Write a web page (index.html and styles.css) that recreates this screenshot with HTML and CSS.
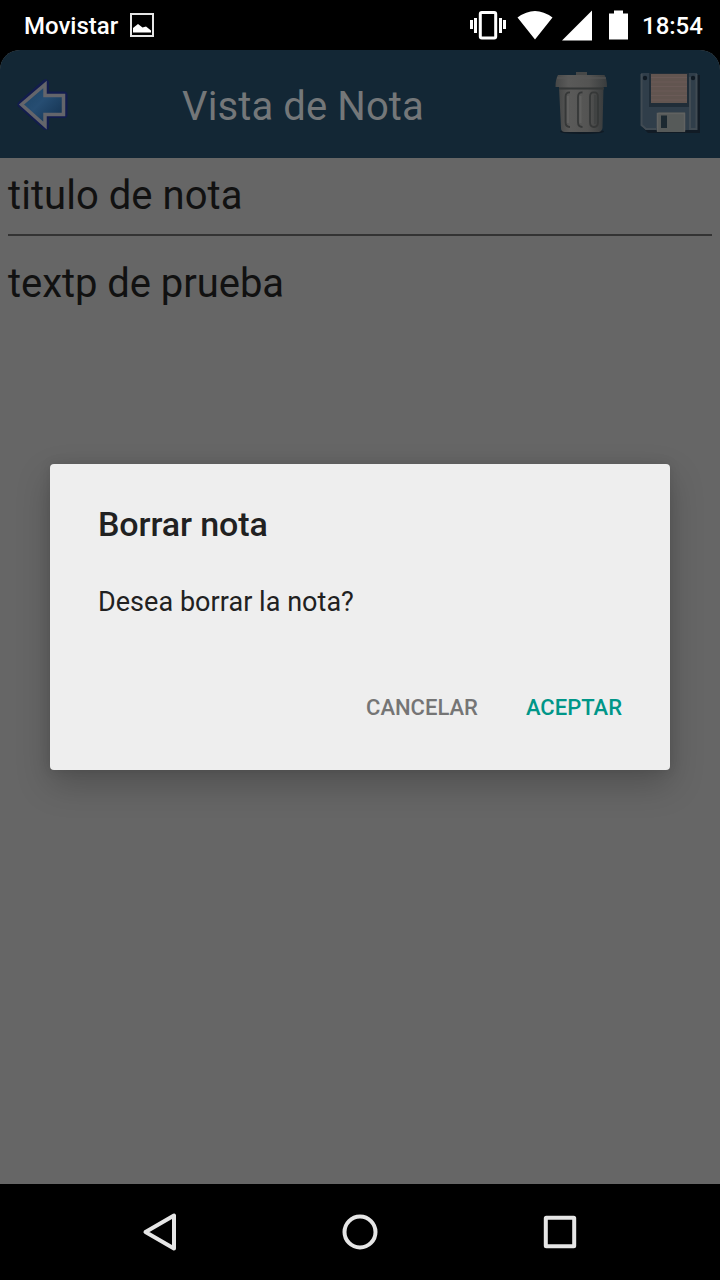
FILE: index.html
```html
<!DOCTYPE html>
<html lang="es">
<head>
<meta charset="utf-8">
<title>Vista de Nota</title>
<link rel="stylesheet" href="styles.css">
</head>
<body>
<div class="phone">
  <div class="status">
    <span class="carrier">Movistar</span>
    <svg class="picture" width="24" height="24" viewBox="0 0 24 24"><rect x="1" y="1" width="22" height="22" fill="none" stroke="#e6e6e6" stroke-width="2"/><path d="M3 19.500V15L8 11 12.500 14.500 16 13.500 21 17.500V19.500Z" fill="#fff"/></svg>
    <svg class="indicators" width="160" height="36" viewBox="0 0 160 36" fill="#fff"><path d="M0 15h3v9H0zM4 13h3v15H4zM29 13h3v15H29zM33 15h3v9h-3z"/><rect x="10.300" y="7.500" width="15.400" height="25.500" rx="1.500" fill="none" stroke="#fff" stroke-width="3"/><path d="M47.500 12.500Q65 -.5 82.500 12.500L65 34.500ZM92 35.500 122 5.500V35.500ZM139 8.500h5V5.500h9v3h5V34.500H139Z"/></svg>
    <span class="clock">18:54</span>
  </div>
  <div class="screen">
    <header class="header">
      <svg class="back" width="64" height="64" viewBox="0 0 64 64"><defs><linearGradient id="blue" x1="0" x2="1" y1="0" y2="1"><stop stop-color="#1b4263"/><stop offset=".45" stop-color="#264d72"/><stop offset="1" stop-color="#102c49"/></linearGradient></defs><path d="M13 32.500 37.500 11V23H56V42.500H37.500V54.500Z" fill="none" stroke="#12185a" stroke-width="7" stroke-linejoin="round" opacity=".7"/><path d="M13.500 32.500 37 12.500V23.500H55.500V42.500H37V53.500Z" fill="url(#blue)" stroke="#64656b" stroke-width="3.500"/></svg>
      <h1 class="heading">Vista de Nota</h1>
      <svg class="trash" width="56" height="66" viewBox="0 0 56 66"><defs><linearGradient id="can"><stop stop-color="#464747"/><stop offset=".25" stop-color="#5a5a59"/><stop offset=".65" stop-color="#545453"/><stop offset="1" stop-color="#393c3d"/></linearGradient></defs><ellipse cx="29" cy="61.500" rx="22" ry="2.500" fill="#101b25"/><path d="M23 2h11v5H23z" fill="#464848"/><path d="M6 17H50.500L49.500 58q-1 4-4 4H12q-4 0-4-4Z" fill="url(#can)"/><path d="M5 5H51.500Q54 9 54 17H2.500Q2.500 9 5 5Z" fill="url(#can)"/><path d="M4 8H53" stroke="#585959" fill="none"/><path d="M6 18.500H51" stroke="#343737" stroke-width="2"/><path d="M17 22.500Q12.500 22 12.500 27V52Q12.500 57 17 57M29.500 22.500Q25 22 25 27V52Q25 57 29.500 57M41 22.500Q37 22 37 27V52Q37 57 41 57Q45 57 45 52V27Q45 22 41 22.500" fill="none" stroke="#363838" stroke-width="1.800"/><path d="M15 26V53M27.500 26V53" stroke="#60605f" stroke-width="2"/><path d="M42.500 25V54" stroke="#414343" stroke-width="3"/></svg>
      <svg class="save" width="60" height="62" viewBox="0 0 60 62"><path d="M3 3H60V61H8L2 55Z" fill="#111b25"/><path d="M1 1H57V58H6L1 53Z" fill="#303e4a"/><path d="M1.500 2V53L6 57H16M50 5V57H56.500V2" fill="none" stroke="#414b53" stroke-width="2"/><path d="M9 1H49V35H9z" fill="#202d38"/><path d="M11 2H47V31H11z" fill="#625550"/><path d="M11 5.500H47M11 10H47M11 14.500H47M11 19H47M11 23.500H47M11 28H47" stroke="#6a5a57"/><circle cx="5" cy="6" r="2.200" fill="#101a23"/><circle cx="53" cy="6" r="2.200" fill="#101a23"/><path d="M17 42.500q0-2 2-2H45V60H17Z" fill="#565a59"/><path d="M17.500 59.500V41.500H44.500V59.500" fill="none" stroke="#606261" stroke-width="1.500"/><path d="M21 43.500h6v12.500h-6z" fill="#1c2931"/></svg>
    </header>
    <main class="note">
      <div class="note-title">titulo de nota</div>
      <div class="note-text">textp de prueba</div>
    </main>
  </div>
  <nav class="nav">
    <svg width="40" height="40" viewBox="0 0 40 40"><path d="M5.500 20 34 3.500V36.500Z"/></svg>
    <svg width="40" height="40" viewBox="0 0 40 40"><circle cx="20" cy="20" r="15.500"/></svg>
    <svg width="40" height="40" viewBox="0 0 40 40"><rect x="5.800" y="5.800" width="28.400" height="28.400" rx=".5"/></svg>
  </nav>
  <section class="dialog" role="dialog">
    <h2 class="dialog-title">Borrar nota</h2>
    <p class="dialog-text">Desea borrar la nota?</p>
    <div class="actions"><button class="action">CANCELAR</button><button class="action accept">ACEPTAR</button></div>
  </section>
</div>
</body>
</html>
```
FILE: styles.css
```css
* { box-sizing: border-box; }
body { margin: 0; font-family: Roboto, sans-serif; background: #000; }
.phone { position: relative; width: 720px; height: 1280px; display: flex; flex-direction: column; overflow: hidden; background: #000; }
.status { height: 50px; display: flex; align-items: center; padding: 0 16px 0 24px; color: #fff; font-size: 24px; font-weight: 500; }
.carrier { width: 106px; line-height: 50px; padding-top: 2px; }
.picture { flex: none; }
.indicators { margin-left: auto; margin-top: -5px; }
.clock { width: 62px; margin-left: 12px; padding-top: 2px; white-space: nowrap; }
.screen { flex: 1; display: flex; flex-direction: column; background: #666; border-radius: 20px 20px 0 0; overflow: hidden; }
.header { height: 108px; flex: none; display: flex; align-items: center; padding: 0 20px 0 8px; background: #132735; color: #747779; }
.back { flex: none; margin-bottom: 1px; }
.heading { flex: 1; margin: 6px 0 0; padding-right: 19px; text-align: center; font-size: 40px; font-weight: 400; line-height: 48px; letter-spacing: .1px; }
.trash { flex: none; margin: 0 31px 2px 0; }
.save { flex: none; margin-bottom: 2px; }
.note { padding: 0 8px; color: #111; font-size: 40px; line-height: 48px; }
.note-title { height: 78px; padding-top: 14px; border-bottom: 2px solid #333; letter-spacing: .05px; }
.note-text { padding-top: 24px; letter-spacing: -.05px; }
.nav { height: 96px; flex: none; display: flex; align-items: center; justify-content: center; gap: 160px; }
.nav svg { fill: none; stroke: #e6e6e6; stroke-width: 4; stroke-linejoin: round; }
.dialog { position: absolute; left: 50px; top: 464px; width: 620px; height: 306px; padding: 40px 48px; border-radius: 4px; background: #eee; box-shadow: 0 14px 34px rgba(0,0,0,.22), 0 0 12px rgba(0,0,0,.1); color: #212121; }
.dialog-title { margin: 0; font-size: 34px; font-weight: 500; line-height: 40px; letter-spacing: -.1px; }
.dialog-text { margin: 42px 0 0; font-size: 27px; line-height: 32px; letter-spacing: .04px; }
.actions { display: flex; justify-content: flex-end; gap: 48px; margin-top: 76px; }
.action { border: 0; padding: 0; background: none; color: #757575; font: 500 22px/28px Roboto, sans-serif; }
.accept { color: #009688; }
```
